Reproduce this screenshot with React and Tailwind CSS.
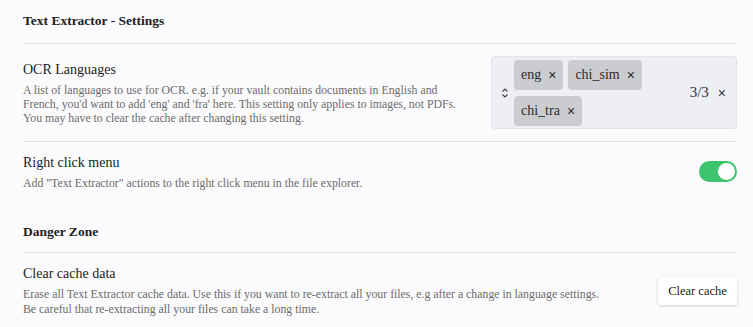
import { useState } from "react";

const serif = { fontFamily: '"Liberation Serif", "Times New Roman", serif' };

const Tag = ({ label }) => (
  <span className="flex h-[30px] items-center gap-[7px] rounded-[4px] bg-[#cbccd0] pl-[7px] pr-[7px] text-[14px] text-[#2a2a2a]">
    {label}
    <span className="font-['Liberation_Sans',sans-serif] text-[14px] leading-none">×</span>
  </span>
);

const Divider = () => <div className="h-px bg-[#e1e1e4]" />;

const App = () => {
  const [on, setOn] = useState(true);

  return (
    <div className="min-h-[327px] bg-[#fbfbfd] pl-[23px] pr-[16px] text-[#222]" style={serif}>
      <h2 className="pt-[12px] pb-[13px] text-[13.5px] font-bold leading-[18px]">
        Text Extractor - Settings
      </h2>
      <Divider />

      <div className="flex items-center justify-between gap-4 pt-[12px] pb-[12px]">
        <div>
          <div className="text-[14px] leading-[18px]">OCR Languages</div>
          <p className="mt-[4px] text-[11.8px] leading-[14px] text-[#6b6b6b]">
            A list of languages to use for OCR. e.g. if your vault contains documents in English and
            <br />
            French, you'd want to add 'eng' and 'fra' here. This setting only applies to images, not PDFs.
            <br />
            You may have to clear the cache after changing this setting.
          </p>
        </div>
        <div className="flex h-[73px] w-[246px] shrink-0 items-center rounded-[4px] border border-[#e2e4e9] bg-[#edeff4] pl-[8px] pr-[10px]">
          <svg width="10" height="12" viewBox="0 0 10 12" fill="none" stroke="#444" strokeWidth="1.2" className="mr-[4px]">
            <path d="M2.5 4.5 5 2l2.5 2.5M2.5 7.5 5 10l2.5-2.5" />
          </svg>
          <div className="flex w-[134px] flex-wrap gap-x-[5px] gap-y-[6px]">
            <Tag label="eng" />
            <Tag label="chi_sim" />
            <Tag label="chi_tra" />
          </div>
          <span className="ml-auto text-[15px] text-[#333]">3/3</span>
          <span className="ml-[9px] font-['Liberation_Sans',sans-serif] text-[14px] leading-none text-[#333]">×</span>
        </div>
      </div>
      <Divider />

      <div className="flex items-start justify-between pt-[12px] pb-[12px]">
        <div>
          <div className="text-[14px] leading-[18px]">Right click menu</div>
          <p className="mt-[4px] text-[11.8px] leading-[14px] text-[#6b6b6b]">
            Add "Text Extractor" actions to the right click menu in the file explorer.
          </p>
        </div>
        <button
          onClick={() => setOn(!on)}
          className={`mt-[7px] flex h-[21px] w-[38px] items-center rounded-full px-[2px] ${on ? "justify-end bg-[#3ec46d]" : "justify-start bg-[#ccc]"}`}
        >
          <span className="h-[17px] w-[17px] rounded-full bg-white" />
        </button>
      </div>

      <h3 className="pt-[21px] pb-[11px] text-[13.5px] font-bold leading-[18px]">Danger Zone</h3>
      <Divider />

      <div className="flex items-center justify-between pt-[12px]">
        <div>
          <div className="text-[14px] leading-[18px]">Clear cache data</div>
          <p className="mt-[4px] text-[11.8px] leading-[15px] text-[#6b6b6b]">
            Erase all Text Extractor cache data. Use this if you want to re-extract all your files, e.g after a change in language settings.
            <br />
            Be careful that re-extracting all your files can take a long time.
          </p>
        </div>
        <button className="h-[28px] w-[79px] shrink-0 rounded-[4px] bg-white text-[12.5px] text-[#222] shadow-[0_1px_3px_rgba(0,0,0,0.18)]">
          Clear cache
        </button>
      </div>
    </div>
  );
};

export default App;
